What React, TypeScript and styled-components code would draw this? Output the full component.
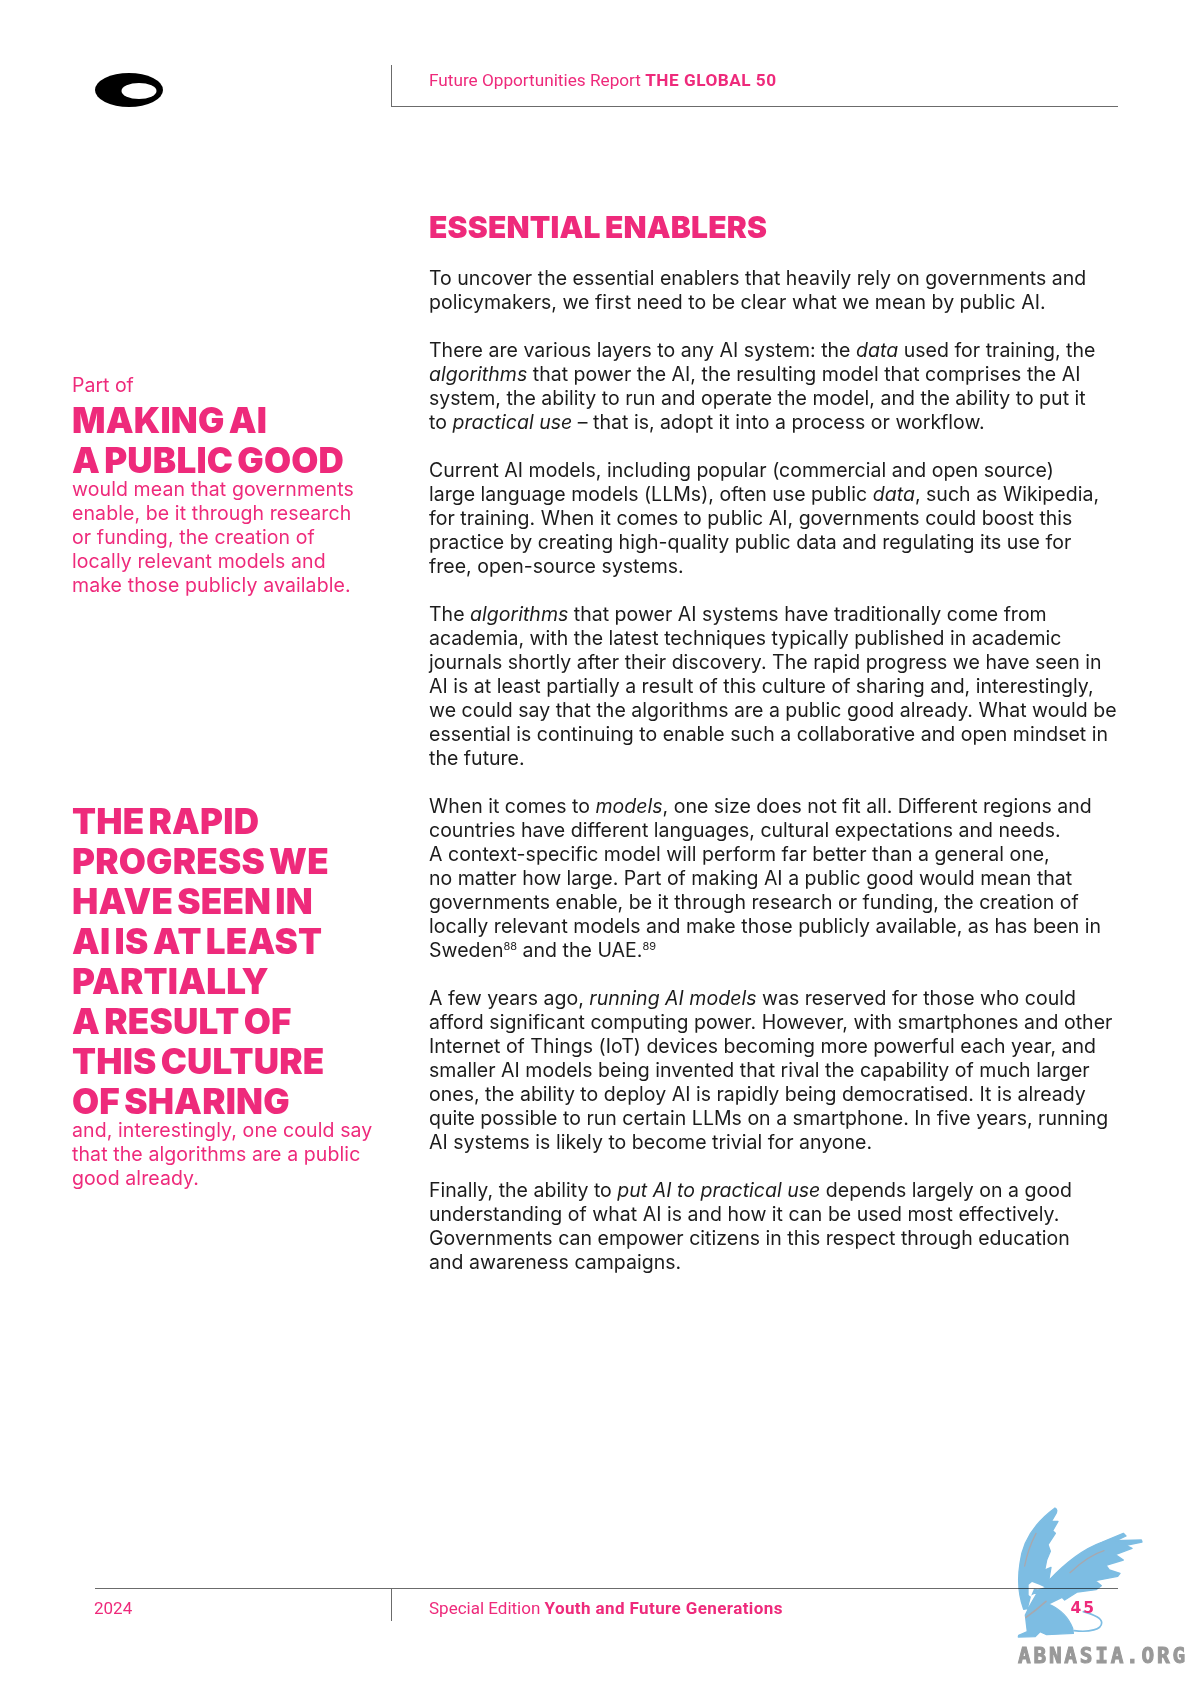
import React from 'react';
import styled, {createGlobalStyle} from "styled-components";

const pink = "#ee2a7b";
const rule = "#6b6b6b";

const GlobalStyle = createGlobalStyle`
  html, body {
    margin: 0;
    padding: 0;
    background: #fff;
  }

  body {
    font-family: Inter, "Liberation Sans", sans-serif;
  }
`;

const Griffin = () => (
    <svg viewBox="0 0 723 612" width="241" height="204">
        <path
            fill="#7dbde3"
            stroke="#7dbde3"
            strokeWidth="4"
            strokeLinejoin="round"
            d="M315 84 C322 87 322 95 316 104 L304 124 L324 124 L308 152 L316 160 L294 194 L301 214 L290 240 L284 270 L303 262 L296 302 C340 255 400 207 455 187 L520 160 L528 168 L498 182 L574 180 L576 186 L528 196 L546 205 L496 224 L520 240 L468 256 L478 270 L510 280 L503 289 L436 302 L454 317 L438 329 L382 336 L344 360 L336 352 L296 372 C325 385 355 410 368 445 L370 460 L290 464 L270 455 L255 470 L205 471 L206 466 L232 455 L226 405 L238 380 L258 345 L262 336 L242 345 L232 386 L221 388 C207 350 202 300 210 250 C217 190 252 130 315 84 Z"
        />
        <path fill="none" stroke="#7dbde3" strokeWidth="5" strokeLinecap="round" d="M372 452 C420 458 455 448 455 428 C455 412 425 402 400 395"/>
        <path fill="#fff" d="M236 314 L246 306 L268 314 L284 322 L264 328 L252 326 L242 350 L236 345 Z"/>
        <path fill="none" stroke="#a8a8ae" strokeWidth="4" strokeLinecap="round" d="M258 160 C245 185 232 215 224 258"/>
        <path fill="none" stroke="#a8a8ae" strokeWidth="4" strokeLinecap="round" d="M462 212 C430 222 395 245 360 278"/>
        <path fill="none" stroke="#a8a8ae" strokeWidth="5" strokeLinecap="round" d="M288 364 C270 380 248 398 228 412"/>
    </svg>
);

const Logo = () => (
    <svg viewBox="0 0 68 34" width="68" height="34">
        <ellipse cx="34" cy="17" rx="34" ry="17" fill="#000"/>
        <ellipse cx="44" cy="18" rx="17.5" ry="8" fill="#fff"/>
    </svg>
);

export default function App() {
    return (
        <Page>
            <GlobalStyle/>

            <Header>
                <LogoCell><Logo/></LogoCell>
                <HeaderTitle>Future Opportunities Report <strong>THE GLOBAL 50</strong></HeaderTitle>
            </Header>

            <Main>
                <Aside>
                    <PullQuote $top={165}>
                        <Lead>Part of</Lead>
                        <QuoteTitle>MAKING AI<br/>A PUBLIC GOOD</QuoteTitle>
                        <QuoteText>
                            would mean that governments<br/>
                            enable, be it through research<br/>
                            or funding, the creation of<br/>
                            locally relevant models and<br/>
                            make those publicly available.
                        </QuoteText>
                    </PullQuote>

                    <PullQuote $top={201}>
                        <QuoteTitle>
                            THE RAPID<br/>
                            PROGRESS WE<br/>
                            HAVE SEEN IN<br/>
                            AI IS AT LEAST<br/>
                            PARTIALLY<br/>
                            A RESULT OF<br/>
                            THIS CULTURE<br/>
                            OF SHARING
                        </QuoteTitle>
                        <QuoteText>
                            and, interestingly, one could say<br/>
                            that the algorithms are a public<br/>
                            good already.
                        </QuoteText>
                    </PullQuote>
                </Aside>

                <Article>
                    <Heading>ESSENTIAL ENABLERS</Heading>

                    <Paragraph>
                        To uncover the essential enablers that heavily rely on governments and<br/>
                        policymakers, we first need to be clear what we mean by public AI.
                    </Paragraph>

                    <Paragraph>
                        There are various layers to any AI system: the <em>data</em> used for training, the<br/>
                        <em>algorithms</em> that power the AI, the resulting model that comprises the AI<br/>
                        system, the ability to run and operate the model, and the ability to put it<br/>
                        to <em>practical use</em> – that is, adopt it into a process or workflow.
                    </Paragraph>

                    <Paragraph>
                        Current AI models, including popular (commercial and open source)<br/>
                        large language models (LLMs), often use public <em>data</em>, such as Wikipedia,<br/>
                        for training. When it comes to public AI, governments could boost this<br/>
                        practice by creating high-quality public data and regulating its use for<br/>
                        free, open-source systems.
                    </Paragraph>

                    <Paragraph>
                        The <em>algorithms</em> that power AI systems have traditionally come from<br/>
                        academia, with the latest techniques typically published in academic<br/>
                        journals shortly after their discovery. The rapid progress we have seen in<br/>
                        AI is at least partially a result of this culture of sharing and, interestingly,<br/>
                        we could say that the algorithms are a public good already. What would be<br/>
                        essential is continuing to enable such a collaborative and open mindset in<br/>
                        the future.
                    </Paragraph>

                    <Paragraph>
                        When it comes to <em>models</em>, one size does not fit all. Different regions and<br/>
                        countries have different languages, cultural expectations and needs.<br/>
                        A context-specific model will perform far better than a general one,<br/>
                        no matter how large. Part of making AI a public good would mean that<br/>
                        governments enable, be it through research or funding, the creation of<br/>
                        locally relevant models and make those publicly available, as has been in<br/>
                        Sweden<Note>88</Note> and the UAE.<Note>89</Note>
                    </Paragraph>

                    <Paragraph>
                        A few years ago, <em>running AI models</em> was reserved for those who could<br/>
                        afford significant computing power. However, with smartphones and other<br/>
                        Internet of Things (IoT) devices becoming more powerful each year, and<br/>
                        smaller AI models being invented that rival the capability of much larger<br/>
                        ones, the ability to deploy AI is rapidly being democratised. It is already<br/>
                        quite possible to run certain LLMs on a smartphone. In five years, running<br/>
                        AI systems is likely to become trivial for anyone.
                    </Paragraph>

                    <Paragraph>
                        Finally, the ability to <em>put AI to practical use</em> depends largely on a good<br/>
                        understanding of what AI is and how it can be used most effectively.<br/>
                        Governments can empower citizens in this respect through education<br/>
                        and awareness campaigns.
                    </Paragraph>
                </Article>
            </Main>

            <Footer>
                <Year>2024</Year>
                <FooterTitle>Special Edition <strong>Youth and Future Generations</strong></FooterTitle>
                <PageNumber>45</PageNumber>
            </Footer>

            <Watermark>
                <Griffin/>
                <WatermarkText>ABNASIA.ORG</WatermarkText>
            </Watermark>
        </Page>
    );
}

const Page = styled.div`
  position: relative;
  display: flex;
  flex-direction: column;
  width: 1191px;
  height: 1684px;
  overflow: hidden;
  background: #fff;
`;

const Header = styled.header`
  display: flex;
  margin: 65px 73px 0 95px;
`;

const LogoCell = styled.div`
  width: 296px;
  padding: 8px 0 0 0;
`;

const HeaderTitle = styled.div`
  flex: 1;
  height: 42px;
  padding: 5px 0 0 37px;
  box-sizing: border-box;
  border-left: 1px solid ${rule};
  border-bottom: 1px solid ${rule};
  line-height: 20px;
  font-family: Roboto, sans-serif;
  font-size: 17.2px;
  color: ${pink};

  strong {
    font-weight: 700;
    letter-spacing: 0.5px;
  }
`;

const Main = styled.main`
  display: grid;
  grid-template-columns: 357px 1fr;
  margin: 97px 0 0 72px;
`;

const Aside = styled.aside`
  display: flex;
  flex-direction: column;
`;

const PullQuote = styled.section<{$top: number}>`
  margin: ${props => props.$top}px 0 0 0;
  color: ${pink};
`;

const Lead = styled.div`
  line-height: 24px;
  font-size: 19.5px;
`;

const QuoteTitle = styled.h3`
  margin: 3px 0 -3px 0;
  line-height: 40px;
  font-size: 35px;
  font-weight: 900;
  letter-spacing: 0.2px;
  word-spacing: -3px;
  white-space: nowrap;
`;

const QuoteText = styled.p`
  margin: 0;
  line-height: 24px;
  font-size: 19.5px;
  letter-spacing: 0.1px;
  white-space: nowrap;
`;

const Article = styled.article`
  color: #1c1c1c;
`;

const Heading = styled.h2`
  margin: 1px 0 21px 0;
  line-height: 36px;
  font-size: 30px;
  font-weight: 900;
  letter-spacing: 0.2px;
  word-spacing: -2px;
  color: ${pink};
`;

const Paragraph = styled.p`
  margin: 0 0 24px 0;
  line-height: 24px;
  font-size: 19.5px;
  letter-spacing: 0.02px;
  white-space: nowrap;
`;

const Note = styled.sup`
  line-height: 0;
  font-size: 11px;
`;

const Footer = styled.footer`
  display: flex;
  height: 32px;
  margin: auto 73px 63px 95px;
  border-top: 1px solid ${rule};
  line-height: 20px;
  font-family: Roboto, sans-serif;
  font-size: 17px;
  color: ${pink};
`;

const Year = styled.div`
  flex: 0 0 297px;
  margin: 9px 0 0 -1px;
`;

const FooterTitle = styled.div`
  flex: 1;
  padding: 9px 0 0 37px;
  border-left: 1px solid ${rule};

  strong {
    font-weight: 700;
    letter-spacing: 0.4px;
  }
`;

const PageNumber = styled.div`
  position: relative;
  z-index: 1;
  margin: 9px 22px 0 0;
  font-family: "DejaVu Sans", sans-serif;
  font-size: 15.5px;
  font-weight: 700;
  letter-spacing: 2px;
`;

const Watermark = styled.div`
  position: absolute;
  left: 950px;
  top: 1480px;
  width: 241px;
  height: 204px;
  mix-blend-mode: multiply;
`;

const WatermarkText = styled.div`
  position: absolute;
  left: 68px;
  top: 164px;
  line-height: 24px;
  font-family: "DejaVu Sans Mono", monospace;
  font-size: 21px;
  font-weight: 700;
  letter-spacing: 2.8px;
  -webkit-text-stroke: 1px #999;
  color: #999;
  white-space: nowrap;
`;
